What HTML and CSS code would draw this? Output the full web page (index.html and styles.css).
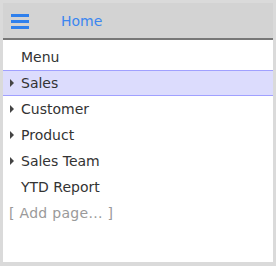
FILE: index.html
```html
<!DOCTYPE html>
<html lang="en">
<head>
    <meta charset="UTF-8">
    <meta name="viewport" content="width=device-width, initial-scale=1.0">
    <title>Home</title>
    <link rel="stylesheet" href="styles.css">
</head>
<body>

    <div class="panel">
        <div class="header">
            <svg class="burger" width="18" height="16" viewBox="0 0 18 16">
                <rect x="0" y="1" width="18" height="3" fill="#2f80ed"/>
                <rect x="0" y="7" width="18" height="3" fill="#2f80ed"/>
                <rect x="0" y="13" width="18" height="3" fill="#2f80ed"/>
            </svg>
            <span class="title">Home</span>
        </div>

        <!-- Page list -->
        <ul class="pages">
            <li class="row"><span class="arrow none"></span>Menu</li>
            <li class="row selected"><span class="arrow"></span>Sales</li>
            <li class="row"><span class="arrow"></span>Customer</li>
            <li class="row"><span class="arrow"></span>Product</li>
            <li class="row"><span class="arrow"></span>Sales Team</li>
            <li class="row"><span class="arrow none"></span>YTD Report</li>
            <li class="row add">[ Add page... ]</li>
        </ul>
    </div>

</body>
</html>
```
FILE: styles.css
```css
body { margin: 0; background: #dadada; font-family: "DejaVu Sans", Verdana, sans-serif; }
.panel { margin: 3px; width: 270px; height: 259px; background: #fff; }
.header { height: 35px; background: #d3d3d3; border-bottom: 2px solid #777; display: flex; align-items: center; padding-left: 8px; }
.burger { display: block; }
.title { margin-left: 32px; font-size: 14px; color: #3b86f0; }
.pages { list-style: none; margin: 0; padding: 4px 0 0 0; }
.row { height: 24px; border-top: 1px solid transparent; border-bottom: 1px solid transparent; display: flex; align-items: center; font-size: 14px; color: #333; padding-left: 7px; }
.row.selected { background: #dcdcfd; border-color: #a0a0ff; }
.arrow { width: 0; height: 0; border-top: 4px solid transparent; border-bottom: 4px solid transparent; border-left: 4px solid #444; margin-right: 7px; }
.arrow.none { border-left-color: transparent; }
.row.add { color: #9a9a9a; padding-left: 6px; letter-spacing: 0.3px; }
```
